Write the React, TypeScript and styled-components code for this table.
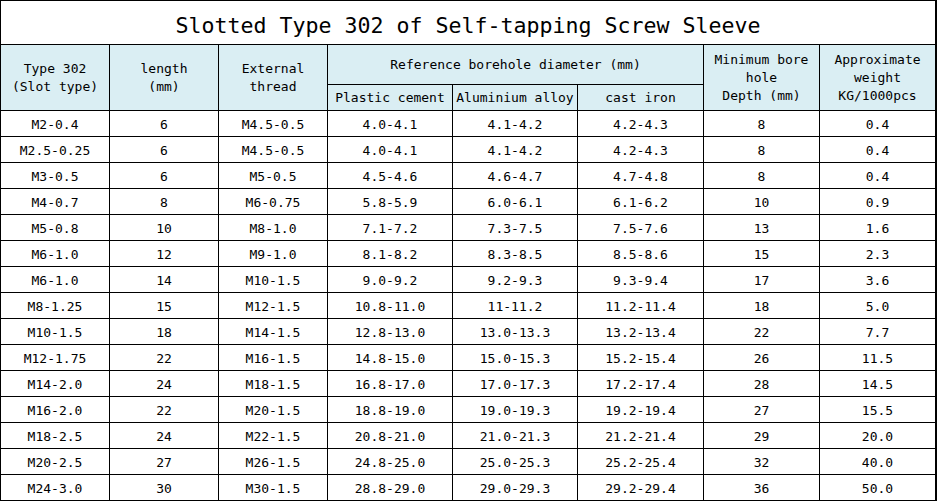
import React from 'react';
import styled, { createGlobalStyle } from 'styled-components';

const GlobalStyle = createGlobalStyle`
  html, body {
    margin: 0;
    padding: 0;
    background: #ffffff;
  }
`;

const Sheet = styled.div`
  display: grid;
  width: 937px;
  box-sizing: border-box;
  grid-template-columns: 108px 108px 108px 124px 124px 125px 115px 115px;
  grid-template-rows: 43px 39px 25px repeat(15, 25px);
  gap: 1px;
  padding: 1px 2px 1px 1px;
  background: #000000;
  font-family: 'DejaVu Sans Mono', 'Liberation Mono', monospace;
  color: #000000;
`;

const Title = styled.div`
  grid-column: 1 / -1;
  display: flex;
  align-items: center;
  justify-content: center;
  background: #ffffff;
  font-size: 21.6px;
  padding-top: 5px;
`;

const HeadCell = styled.div<{ $col: string; $row: string }>`
  grid-column: ${({ $col }) => $col};
  grid-row: ${({ $row }) => $row};
  display: flex;
  align-items: center;
  justify-content: center;
  text-align: center;
  background: #daeef3;
  font-size: 13px;
  line-height: 18px;
  white-space: pre-line;
`;

const Cell = styled.div`
  display: flex;
  align-items: center;
  justify-content: center;
  background: #ffffff;
  font-size: 13px;
  padding-top: 2px;
`;

const rows: string[][] = [
  ['M2-0.4', '6', 'M4.5-0.5', '4.0-4.1', '4.1-4.2', '4.2-4.3', '8', '0.4'],
  ['M2.5-0.25', '6', 'M4.5-0.5', '4.0-4.1', '4.1-4.2', '4.2-4.3', '8', '0.4'],
  ['M3-0.5', '6', 'M5-0.5', '4.5-4.6', '4.6-4.7', '4.7-4.8', '8', '0.4'],
  ['M4-0.7', '8', 'M6-0.75', '5.8-5.9', '6.0-6.1', '6.1-6.2', '10', '0.9'],
  ['M5-0.8', '10', 'M8-1.0', '7.1-7.2', '7.3-7.5', '7.5-7.6', '13', '1.6'],
  ['M6-1.0', '12', 'M9-1.0', '8.1-8.2', '8.3-8.5', '8.5-8.6', '15', '2.3'],
  ['M6-1.0', '14', 'M10-1.5', '9.0-9.2', '9.2-9.3', '9.3-9.4', '17', '3.6'],
  ['M8-1.25', '15', 'M12-1.5', '10.8-11.0', '11-11.2', '11.2-11.4', '18', '5.0'],
  ['M10-1.5', '18', 'M14-1.5', '12.8-13.0', '13.0-13.3', '13.2-13.4', '22', '7.7'],
  ['M12-1.75', '22', 'M16-1.5', '14.8-15.0', '15.0-15.3', '15.2-15.4', '26', '11.5'],
  ['M14-2.0', '24', 'M18-1.5', '16.8-17.0', '17.0-17.3', '17.2-17.4', '28', '14.5'],
  ['M16-2.0', '22', 'M20-1.5', '18.8-19.0', '19.0-19.3', '19.2-19.4', '27', '15.5'],
  ['M18-2.5', '24', 'M22-1.5', '20.8-21.0', '21.0-21.3', '21.2-21.4', '29', '20.0'],
  ['M20-2.5', '27', 'M26-1.5', '24.8-25.0', '25.0-25.3', '25.2-25.4', '32', '40.0'],
  ['M24-3.0', '30', 'M30-1.5', '28.8-29.0', '29.0-29.3', '29.2-29.4', '36', '50.0'],
];

export default function App() {
  return (
    <>
      <GlobalStyle />
      <Sheet>
        <Title>Slotted Type 302 of Self-tapping Screw Sleeve</Title>
        <HeadCell $col="1" $row="2 / 4">{'Type 302\n(Slot type)'}</HeadCell>
        <HeadCell $col="2" $row="2 / 4">{'length\n(mm)'}</HeadCell>
        <HeadCell $col="3" $row="2 / 4">{'External\nthread'}</HeadCell>
        <HeadCell $col="4 / 7" $row="2">Reference borehole diameter (mm)</HeadCell>
        <HeadCell $col="4" $row="3">Plastic cement</HeadCell>
        <HeadCell $col="5" $row="3">Aluminium alloy</HeadCell>
        <HeadCell $col="6" $row="3">cast iron</HeadCell>
        <HeadCell $col="7" $row="2 / 4">{'Minimum bore\nhole\nDepth (mm)'}</HeadCell>
        <HeadCell $col="8" $row="2 / 4">{'Approximate\nweight\nKG/1000pcs'}</HeadCell>
        {rows.map((row, r) =>
          row.map((value, c) => <Cell key={`${r}-${c}`}>{value}</Cell>)
        )}
      </Sheet>
    </>
  );
}
